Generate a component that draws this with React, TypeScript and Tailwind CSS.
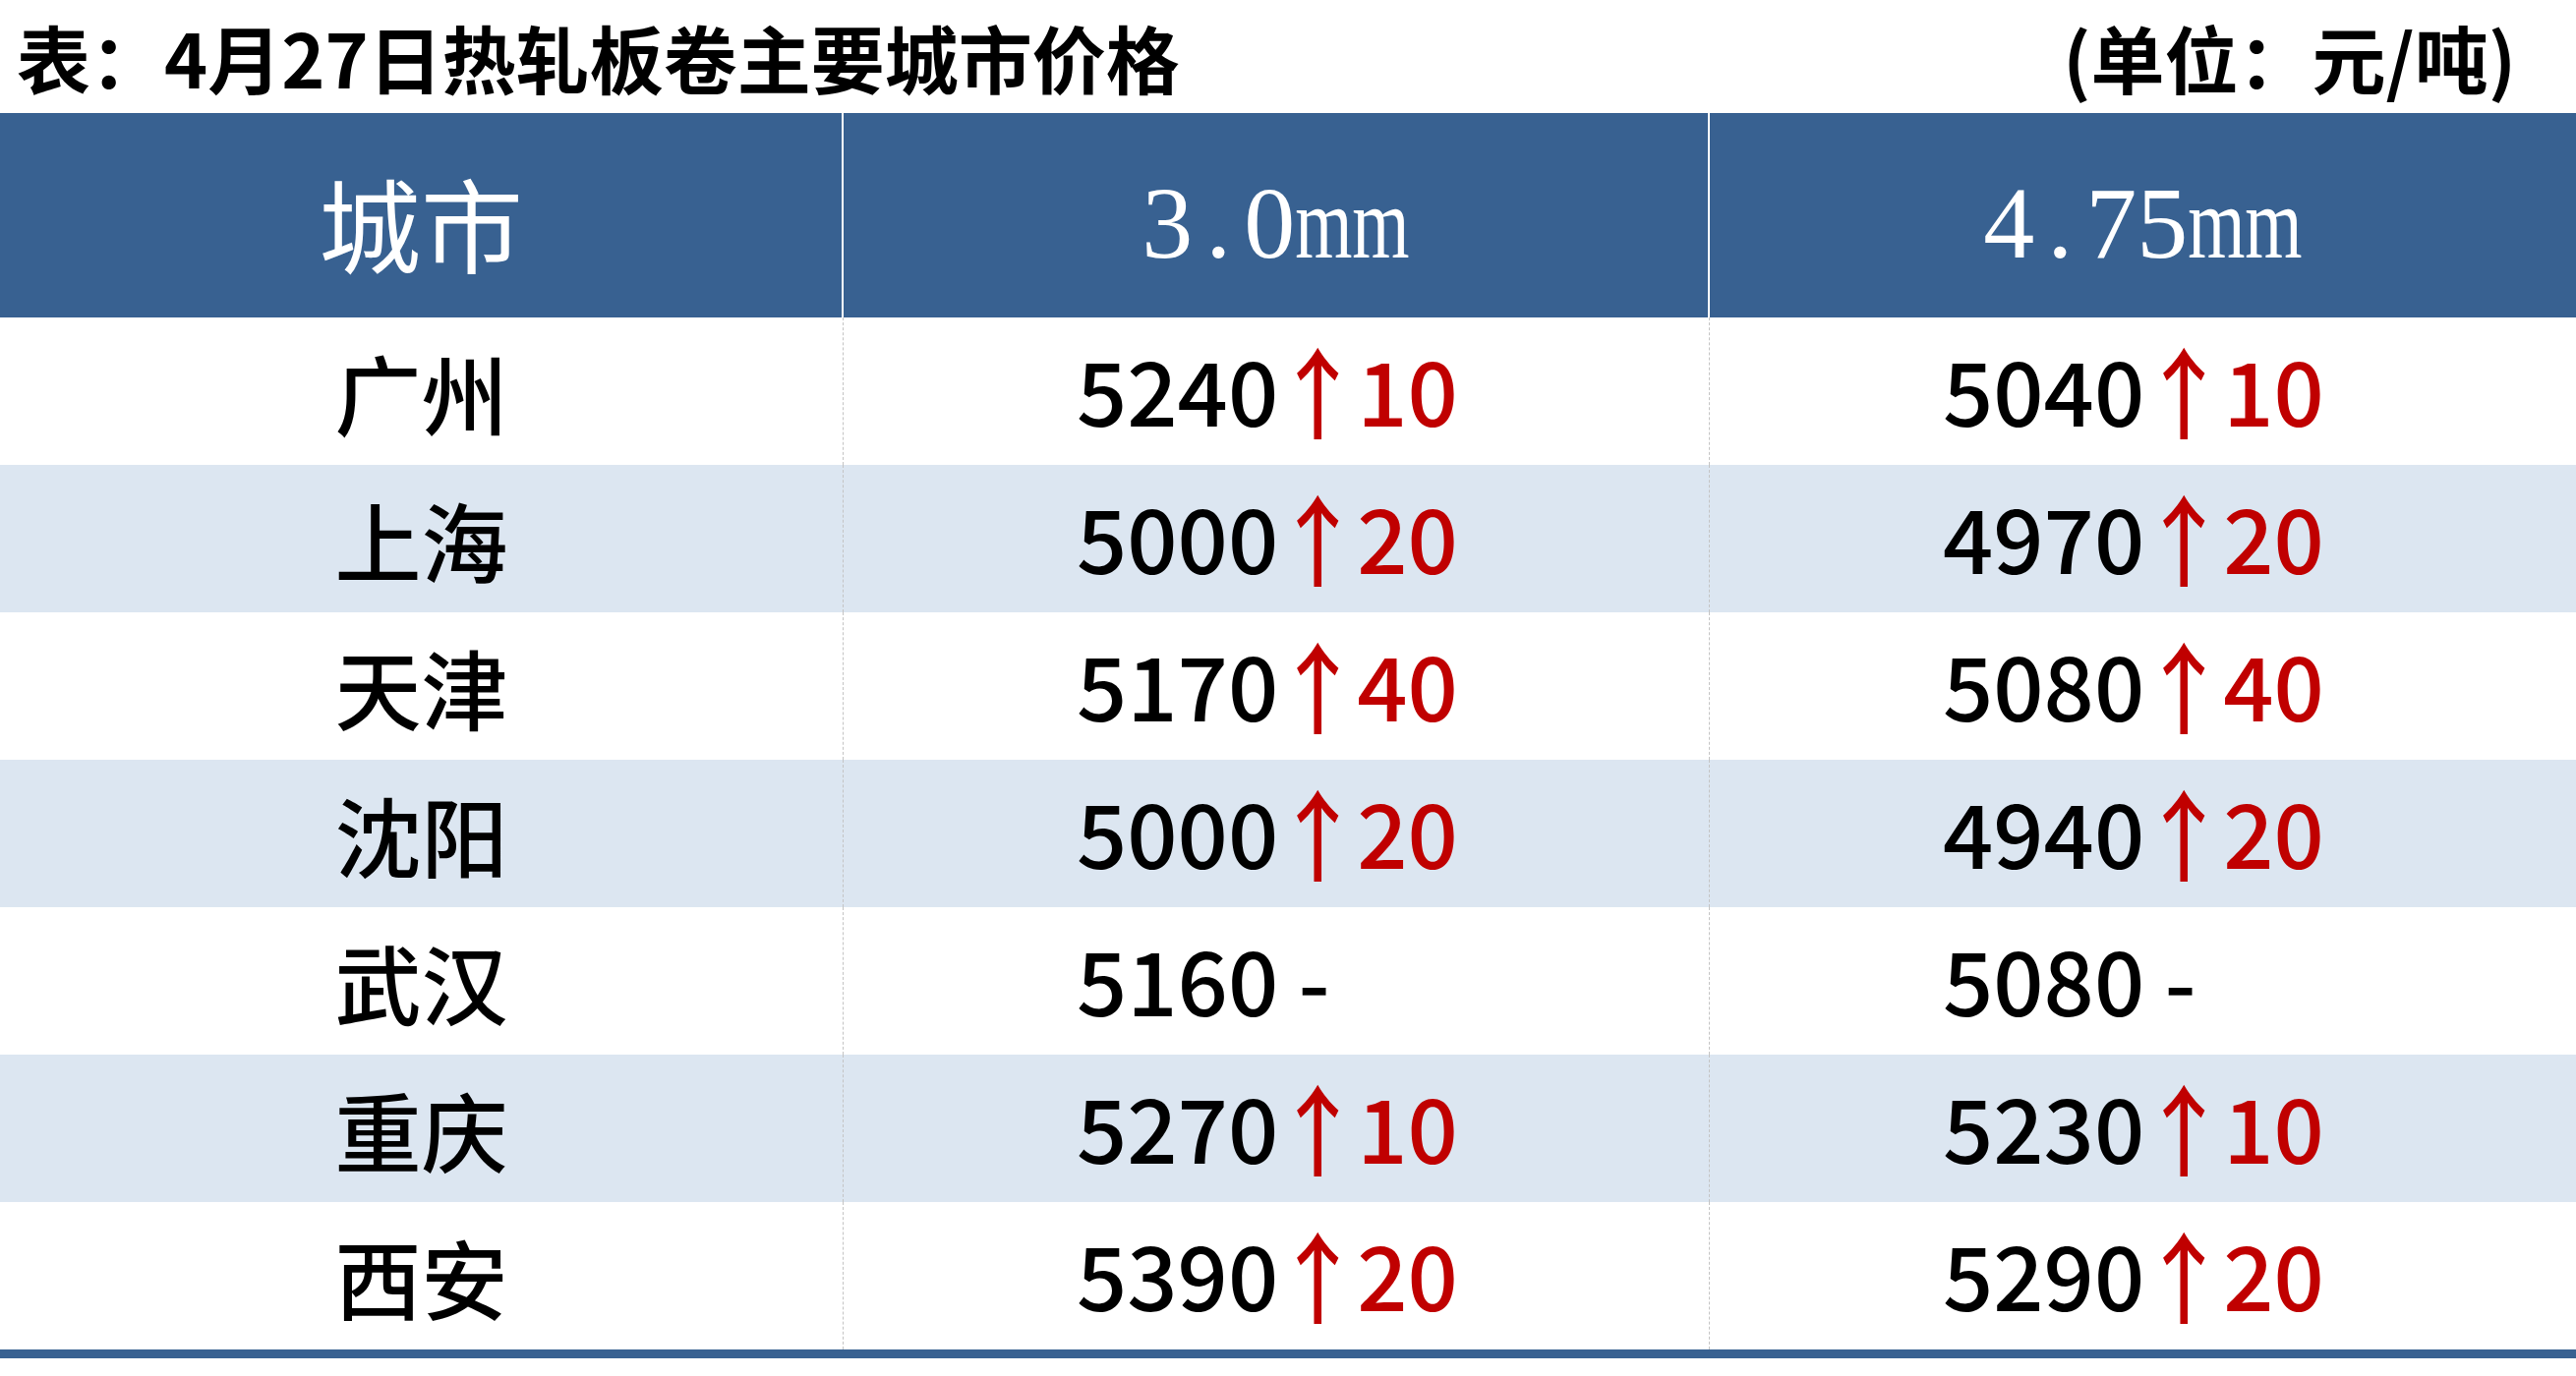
import React from 'react';

interface PriceRow {
  city: string;
  thin: string;
  thinDelta: string | null;
  thick: string;
  thickDelta: string | null;
}

const rows: PriceRow[] = [
  { city: '广州', thin: '5240', thinDelta: '10', thick: '5040', thickDelta: '10' },
  { city: '上海', thin: '5000', thinDelta: '20', thick: '4970', thickDelta: '20' },
  { city: '天津', thin: '5170', thinDelta: '40', thick: '5080', thickDelta: '40' },
  { city: '沈阳', thin: '5000', thinDelta: '20', thick: '4940', thickDelta: '20' },
  { city: '武汉', thin: '5160', thinDelta: null, thick: '5080', thickDelta: null },
  { city: '重庆', thin: '5270', thinDelta: '10', thick: '5230', thickDelta: '10' },
  { city: '西安', thin: '5390', thinDelta: '20', thick: '5290', thickDelta: '20' },
];

const sans = "font-['Noto_Sans_CJK_SC','Noto_Sans',sans-serif]";

// half-width serif digits like the original sheet's SimSun header
function HalfWidth({ text }: { text: string }) {
  return (
    <span className="inline-flex font-['Liberation_Serif','Noto_Sans_CJK_SC',serif]">
      {text.split('').map((ch, i) =>
        ch === 'm' ? (
          <span key={i} className="inline-flex w-[0.56em] justify-center">
            <span className="inline-block scale-x-[0.72]">m</span>
          </span>
        ) : (
          <span key={i} className="inline-flex w-[0.5em] justify-center">
            {ch}
          </span>
        )
      )}
    </span>
  );
}

function Price({ value, delta }: { value: string; delta: string | null }) {
  return (
    <div className="flex items-center h-full pl-[237px] pb-[6px] text-[90px] leading-none font-medium text-black">
      <span>{value}</span>
      {delta ? (
        <span className="flex items-center text-[#c00000]">
          <span className="inline-block -mx-[5px] scale-y-[1.12]">↑</span>
          <span>{delta}</span>
        </span>
      ) : (
        <span>&nbsp;-</span>
      )}
    </div>
  );
}

export default function App() {
  return (
    <div className={`w-[2620px] h-[1400px] bg-white ${sans}`}>
      <div className="flex items-center justify-between h-[115px] pl-[17px] pr-[61px] text-[75px] leading-none font-bold text-black">
        <span>表：4月27日热轧板卷主要城市价格</span>
        <span>(单位：元/吨)</span>
      </div>

      <div className="grid grid-cols-[858px_881px_881px] h-[208px] bg-[#386191] text-white text-[104px] leading-none">
        <div className="flex items-center justify-center pt-[14px] border-r-2 border-white">
          <span>城市</span>
        </div>
        <div className="flex items-center justify-center pt-[16px] border-r-2 border-white">
          <HalfWidth text="3.0mm" />
        </div>
        <div className="flex items-center justify-center pt-[16px]">
          <HalfWidth text="4.75mm" />
        </div>
      </div>

      {rows.map((row, i) => (
        <div
          key={row.city}
          className={`grid grid-cols-[858px_881px_881px] h-[150px] ${
            i % 2 === 1 ? 'bg-[#dce6f1]' : 'bg-white'
          }`}
        >
          <div className="flex items-center justify-center border-r border-dashed border-[#c4c4c4] text-[88px] leading-none font-medium text-black">
            {row.city}
          </div>
          <div className="border-r border-dashed border-[#c4c4c4]">
            <Price value={row.thin} delta={row.thinDelta} />
          </div>
          <div>
            <Price value={row.thick} delta={row.thickDelta} />
          </div>
        </div>
      ))}

      <div className="h-[9px] bg-[#386191]" />
    </div>
  );
}
